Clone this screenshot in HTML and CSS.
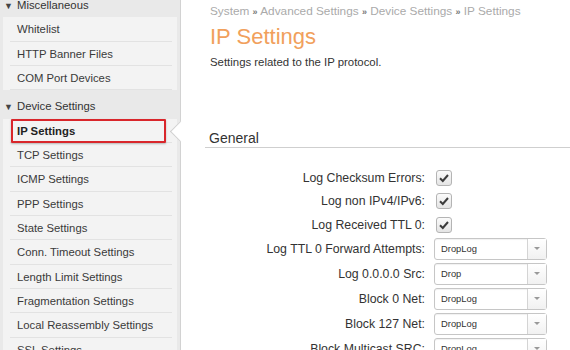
FILE: index.html
```html
<!DOCTYPE html>
<html lang="en">
<head>
    <meta charset="UTF-8">
    <title>IP Settings</title>
    <link rel="stylesheet" href="styles.css">
</head>
<body>
    <div class="page">
        <div class="sidebar">
            <div class="group-title"><span class="caret">▼</span>Miscellaneous</div>
            <div class="menu">
                <div class="menu-item">Whitelist</div>
                <div class="menu-item">HTTP Banner Files</div>
                <div class="menu-item">COM Port Devices</div>
            </div>

            <div class="group-title spaced"><span class="caret">▼</span>Device Settings</div>
            <div class="menu">
                <div class="menu-item active">IP Settings</div>
                <div class="menu-item">TCP Settings</div>
                <div class="menu-item">ICMP Settings</div>
                <div class="menu-item">PPP Settings</div>
                <div class="menu-item">State Settings</div>
                <div class="menu-item">Conn. Timeout Settings</div>
                <div class="menu-item">Length Limit Settings</div>
                <div class="menu-item">Fragmentation Settings</div>
                <div class="menu-item">Local Reassembly Settings</div>
                <div class="menu-item">SSL Settings</div>
            </div>
        </div>

        <div class="main">
            <div class="breadcrumb">
                System <span class="sep">»</span> Advanced Settings <span class="sep">»</span> Device Settings <span class="sep">»</span> IP Settings
            </div>
            <h1 class="title">IP Settings</h1>
            <p class="description">Settings related to the IP protocol.</p>

            <div class="section">
                <h2 class="section-title">General</h2>

                <div class="form">
                    <div class="row check-row">
                        <label>Log Checksum Errors:</label>
                        <span class="checkbox"><svg viewBox="0 0 16 16" width="16" height="16"><path d="M4 8.2 L6.8 11 L12 5" fill="none" stroke="#3c3c3c" stroke-width="2"/></svg></span>
                    </div>
                    <div class="row check-row">
                        <label>Log non IPv4/IPv6:</label>
                        <span class="checkbox"><svg viewBox="0 0 16 16" width="16" height="16"><path d="M4 8.2 L6.8 11 L12 5" fill="none" stroke="#3c3c3c" stroke-width="2"/></svg></span>
                    </div>
                    <div class="row check-row">
                        <label>Log Received TTL 0:</label>
                        <span class="checkbox"><svg viewBox="0 0 16 16" width="16" height="16"><path d="M4 8.2 L6.8 11 L12 5" fill="none" stroke="#3c3c3c" stroke-width="2"/></svg></span>
                    </div>
                    <div class="row select-row">
                        <label>Log TTL 0 Forward Attempts:</label>
                        <div class="select"><span class="value">DropLog</span><span class="arrow"></span></div>
                    </div>
                    <div class="row select-row">
                        <label>Log 0.0.0.0 Src:</label>
                        <div class="select"><span class="value">Drop</span><span class="arrow"></span></div>
                    </div>
                    <div class="row select-row">
                        <label>Block 0 Net:</label>
                        <div class="select"><span class="value">DropLog</span><span class="arrow"></span></div>
                    </div>
                    <div class="row select-row">
                        <label>Block 127 Net:</label>
                        <div class="select"><span class="value">DropLog</span><span class="arrow"></span></div>
                    </div>
                    <div class="row select-row">
                        <label>Block Multicast SRC:</label>
                        <div class="select"><span class="value">DropLog</span><span class="arrow"></span></div>
                    </div>
                </div>
            </div>
        </div>
    </div>
</body>
</html>
```

FILE: styles.css
```css
* {
    margin: 0;
    padding: 0;
    box-sizing: border-box;
}

body {
    font-family: 'Liberation Sans', Arial, sans-serif;
    font-size: 12.3px;
    color: #333;
    background: white;
    overflow: hidden;
}

.page {
    display: flex;
    height: 350px;
}

/* Sidebar */

.sidebar {
    width: 181px;
    flex-shrink: 0;
    background: #e9e9e9;
    border-right: 1px solid #d2d2d2;
    margin-top: -7px;
    font-size: 11.3px;
}

.group-title {
    height: 24.35px;
    line-height: 24.35px;
    padding-left: 4px;
    color: #333;
}

.group-title.spaced {
    margin-top: 4px;
}

.caret {
    display: inline-block;
    width: 13px;
    font-size: 9px;
    color: #444;
}

.menu {
    background: #f3f3f3;
    margin: 0 3px;
    padding: 0 5px 0 7px;
}

.menu-item {
    position: relative;
    height: 24.35px;
    line-height: 24px;
    padding-left: 7px;
    border-bottom: 1px solid #e2e2e2;
    color: #3a3a3a;
}

.menu-item.active {
    font-weight: bold;
    color: #222;
}

.menu-item.active::before {
    content: "";
    position: absolute;
    left: 1px;
    right: 6px;
    top: 0;
    bottom: -1px;
    border: 2px solid #d9262b;
    border-radius: 1px;
    box-shadow: 0 1px 2px rgba(0,0,0,0.25);
}

.menu-item.active::after {
    content: "";
    position: absolute;
    left: 163px;
    top: 5px;
    width: 14px;
    height: 14px;
    background: white;
    border-left: 1px solid #cfcfcf;
    border-bottom: 1px solid #cfcfcf;
    transform: rotate(45deg);
    z-index: 2;
}

/* Main content */

.main {
    flex: 1;
    padding: 4px 0 0 29px;
}

.breadcrumb {
    font-size: 11.8px;
    line-height: 14px;
    color: #aaa;
    white-space: nowrap;
}

.breadcrumb .sep {
    color: #777;
    font-size: 9px;
    font-weight: bold;
}

.title {
    margin-top: 5px;
    font-size: 22px;
    line-height: 26px;
    font-weight: normal;
    color: #f1a05c;
}

.description {
    margin-top: 5px;
    font-size: 11.4px;
    line-height: 14px;
    color: #333;
}

.section {
    margin: 60px 0 0 -5px;
}

.section-title {
    font-size: 14px;
    line-height: 18px;
    font-weight: normal;
    color: #333;
    padding-left: 4px;
    border-bottom: 1px solid #cfcfcf;
}

.form {
    margin-top: 18px;
    margin-left: -24px;
}

.row {
    display: grid;
    grid-template-columns: 244px 1fr;
    column-gap: 9px;
    align-items: center;
}

.row label {
    text-align: right;
    color: #333;
}

.check-row {
    height: 23.5px;
}

.select-row {
    height: 25px;
}

.checkbox {
    display: block;
    width: 16px;
    height: 16px;
    margin-left: 2px;
    border: 1px solid #b4b4b4;
    border-radius: 3px;
    background: linear-gradient(#fbfbfb, #e4e4e4);
}

.checkbox svg {
    display: block;
    margin: -1px 0 0 -1px;
}

.select {
    display: flex;
    width: 113px;
    height: 22px;
    border: 1px solid #c6c6c6;
    border-radius: 3px;
    background: white;
    box-shadow: inset 0 1px 1px rgba(0,0,0,0.06);
}

.select .value {
    flex: 1;
    padding-left: 6px;
    line-height: 20px;
    font-size: 9.4px;
    color: #333;
}

.select .arrow {
    width: 19px;
    border-left: 1px solid #d4d4d4;
    background: linear-gradient(#fff, #f1f1f1);
    position: relative;
}

.select .arrow::after {
    content: "";
    position: absolute;
    left: 6px;
    top: 8px;
    border-left: 3px solid transparent;
    border-right: 3px solid transparent;
    border-top: 3px solid #999;
}
```
